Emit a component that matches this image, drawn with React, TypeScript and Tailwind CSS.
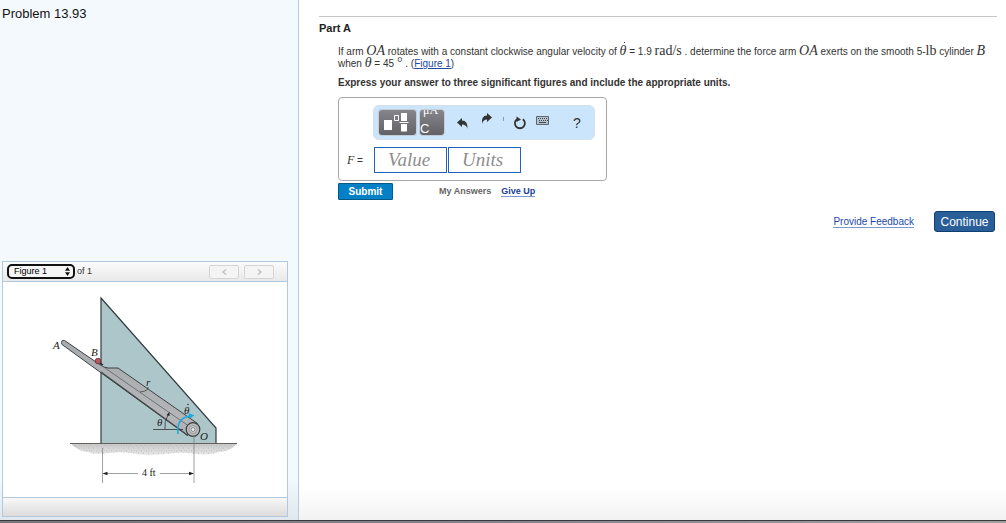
import React from "react";

const sans = "font-['Liberation_Sans',Arial,sans-serif]";
const serif = "font-['Liberation_Serif','Times_New_Roman',serif]";

function MathText({ children, upright = false }: { children: React.ReactNode; upright?: boolean }) {
  return (
    <span className={`${serif} text-[14px] leading-[0px] ${upright ? "" : "italic"}`}>{children}</span>
  );
}

function ArmDiagram() {
  return (
    <svg
      viewBox="3 282 284 215"
      className="block w-full"
      role="img"
      aria-label="Arm OA resting against cylinder B"
    >
      <defs>
        <linearGradient id="arm" x1="0" y1="1" x2="0.6" y2="0">
          <stop offset="0" stopColor="#8d9194" />
          <stop offset="0.5" stopColor="#b4b6b9" />
          <stop offset="1" stopColor="#9b9fa2" />
        </linearGradient>
        <linearGradient id="ground" x1="0" y1="0" x2="0" y2="1">
          <stop offset="0" stopColor="#c9c9c9" />
          <stop offset="1" stopColor="#e8e8e8" />
        </linearGradient>
        <pattern id="grain" width="5" height="5" patternUnits="userSpaceOnUse">
          <path d="M1 1h1M3 3h1M4 0h1" stroke="#b8b8b8" strokeWidth="1" />
        </pattern>
      </defs>
      <path d="M71 444H237Q229 452 218 452C205 458 190 451 175 453S145 456 130 453S100 457 88 452Q78 451 71 444Z" fill="url(#ground)" />
      <path d="M71 444H237Q229 452 218 452C205 458 190 451 175 453S145 456 130 453S100 457 88 452Q78 451 71 444Z" fill="url(#grain)" />
      <path d="M101 298L216 428V443.500H101Z" fill="#adc6ca" stroke="#343b3e" strokeWidth="1.200" />
      <path d="M70 443.500H237" stroke="#66605d" strokeWidth="1" />
      <path
        d="M64.500 340.500L99 364Q104 368 108 368H118L197.500 423.500L187.500 435.500L62 344.500Q60 340 64.500 340.500Z"
        fill="url(#arm)"
        stroke="#3e4244"
        strokeWidth="1"
      />
      <path d="M101 372L188 435.500" stroke="#43484a" strokeWidth="1.200" />
      <path d="M105 368L193 429" stroke="#53575a" strokeWidth="0.700" />
      <path d="M140 392Q149 391 148 387" fill="none" stroke="#333" strokeWidth="0.700" />
      <circle cx="98" cy="361" r="2.800" fill="#c2545b" stroke="#553436" strokeWidth="0.800" />
      <path d="M100 363l3 2" stroke="#222" strokeWidth="1.300" />
      <circle cx="193" cy="429.500" r="6.800" fill="#b8babb" stroke="#383d3f" strokeWidth="1.200" />
      <circle cx="193" cy="429.500" r="4" fill="#c8caca" stroke="#777" strokeWidth="0.500" />
      <circle cx="193" cy="429.500" r="1.900" fill="#eee" stroke="#666" strokeWidth="0.700" />
      <path d="M153 429.500H183M165 429Q164 421 168 415" fill="none" stroke="#333" strokeWidth="0.800" />
      <path d="M169.500 412l0 4l-3-1Z" fill="#222" />
      <path d="M178 434Q176 418 190 416" fill="none" stroke="#17aade" strokeWidth="1.500" />
      <path d="M188.500 413l6 2.500l-5 3Z" fill="#17aade" />
      <path d="M102.500 448V483M194 436V483M104 473.500H138M160 473.500H193" stroke="#777" strokeWidth="0.700" />
      <path d="M102.500 473.500l5-1.700v3.400ZM194 473.500l-5-1.700v3.400Z" fill="#222" />
      <g className={`${serif} italic`} fontSize="11" fill="#222">
        <text x="53" y="349">A</text>
        <text x="91" y="356">B</text>
        <text x="146" y="386">r</text>
        <text x="157" y="426">θ</text>
        <text x="184" y="414">θ</text>
        <text x="200" y="440">O</text>
      </g>
      <circle cx="188" cy="404.500" r="0.700" fill="#222" />
      <text x="142" y="476" fontSize="10" className={serif} fill="#222">4 ft</text>
    </svg>
  );
}

function FigurePanel() {
  const pager =
    "flex h-[14px] w-[30px] items-center justify-center rounded-xs border border-[#d5d5d5] bg-[#f4f4f4] text-[#bcbcbc]";
  return (
    <section className="mr-[10px] mb-[3px] ml-[2px] border border-[#b0c9df] bg-white">
      <header className="flex h-5 items-center border-b border-[#b0c9df] bg-linear-to-b from-[#fbfbfb] to-[#e9e9e9] pr-[13px] pl-1 text-[9px] text-[#333]">
        <div className="relative">
          <select
            aria-label="Figure"
            className="block h-[15px] w-[68px] appearance-none rounded-[5px] border-2 border-[#111] bg-[#f5f5f5] pl-[5px] text-[9px] leading-none text-black"
          >
            <option>Figure 1</option>
          </select>
          <svg viewBox="0 0 5 9" className="pointer-events-none absolute top-[3px] right-[5px] h-[9px] w-[5px]" aria-hidden="true">
            <path d="M0 3.800L2.500 0L5 3.800ZM0 5.200L2.500 9L5 5.200Z" fill="#111" />
          </svg>
        </div>
        <span className="ml-[2px]">of 1</span>
        <div className="ml-auto flex gap-[5px]">
          <button className={pager} aria-label="Previous figure">
            <svg viewBox="0 0 5 6" className="h-[6px] w-[5px]"><path d="M4 .5L1 3L4 5.500" fill="none" stroke="currentColor" strokeWidth="1.300" /></svg>
          </button>
          <button className={pager} aria-label="Next figure">
            <svg viewBox="0 0 5 6" className="h-[6px] w-[5px]"><path d="M1 .5L4 3L1 5.500" fill="none" stroke="currentColor" strokeWidth="1.300" /></svg>
          </button>
        </div>
      </header>
      <ArmDiagram />
      <footer className="h-[19px] border-t border-[#b0c9df] bg-linear-to-b from-[#f8f8f8] to-[#dcdcdc]" />
    </section>
  );
}

function EquationToolbar() {
  const dark = "rounded-[3px] bg-linear-to-b from-[#85858b] to-[#626267] shadow-[0_0_0_1px_#c4cdd5]";
  return (
    <div className="flex h-[35px] w-[222px] items-center rounded-md border border-[#d7dfe7] bg-[#cbe5fd] pl-[5px] text-[#333]">
      <button className={`${dark} h-[25px] w-[37px]`} aria-label="Templates">
        <svg viewBox="0 0 37 25" className="block h-[25px] w-[37px]">
          <path d="M5 10h8v10H5ZM22 3h6v8h-6ZM22 14h6v7.500h-6ZM20.500 12h9v1h-9Z" fill="#fff" />
          <path d="M15.500 5.500h4v5h-4Z" fill="none" stroke="#fff" />
        </svg>
      </button>
      <button className={`${dark} ml-1 flex h-[25px] w-6 flex-col justify-between overflow-hidden text-left text-white`} aria-label="Symbols">
        <span className={`${serif} -mt-[6px] pl-[3px] text-[12px] leading-[12px]`}>μÅ</span>
        <span className="text-[13px] leading-[13px]">C</span>
      </button>
      <button className="ml-[13px]" aria-label="Undo">
        <svg viewBox="0 0 12 12" className="block h-3 w-3">
          <path d="M0 5.500L5 1V3.500Q11 3.500 10.500 12Q9.500 7.500 5 7.500V10Z" fill="currentColor" />
        </svg>
      </button>
      <button className="mb-[9px] ml-3" aria-label="Redo">
        <svg viewBox="0 0 12 12" className="block h-3 w-3">
          <path d="M11 5.500L6 1V3.500Q0 3.500 1 12Q2 7.500 6 7.500V10Z" fill="currentColor" />
        </svg>
      </button>
      <span className="mb-2 ml-[10px] h-1 w-px bg-[#879bac]" />
      <button className="ml-[9px]" aria-label="Reset">
        <svg viewBox="0 0 14 14" className="block h-[14px] w-[14px]">
          <path d="M9.800 3.200A5 5 0 1 1 4 3.200" fill="none" stroke="currentColor" strokeWidth="1.800" />
          <path d="M3.500 0.500L8 3.500L3.500 6Z" fill="currentColor" />
        </svg>
      </button>
      <button className="mb-1 ml-[9px]" aria-label="Keyboard">
        <svg viewBox="0 0 14 10" className="block h-[10px] w-[14px]">
          <path d="M.5 .5h12v8H.5Z" fill="#b4c1cc" stroke="#5d6870" />
          <path d="M2 2.500h10M3 4.500h9" stroke="#3f4950" strokeDasharray="1 1" />
          <path d="M3 6.500h7" stroke="#3f4950" />
        </svg>
      </button>
      <button className="ml-[23px] text-[14px] leading-none" aria-label="Help">?</button>
    </div>
  );
}

export default function App() {
  const answer = `${serif} h-[26px] w-[73px] border border-[#2463bd] bg-white px-[13px] text-[19px] italic outline-none placeholder:text-[#8d8d8d]`;
  return (
    <div className={`${sans} flex min-h-screen flex-col bg-white text-[#333]`}>
      <div className="flex flex-1">
        <aside className="flex w-[299px] shrink-0 flex-col justify-between border-r border-[#b5cce1] bg-linear-to-b from-[#f4f9fd] from-92% to-[#e2e7ed]">
          <h1 className="pt-[6px] pl-[2px] text-[13px] leading-[15px] text-[#111]">Problem 13.93</h1>
          <FigurePanel />
        </aside>
        <main className="min-w-0 flex-1 bg-linear-to-b from-white from-94% to-[#f2f2f2] pt-4 pr-[9px] pl-5">
          <hr className="border-[#c6c6c6]" />
          <h2 className="mt-[5px] text-[11px] leading-[13px] font-bold text-[#222]">Part A</h2>
          <div className="pl-[19px]">
            <p className="mt-[11px] text-[10px] leading-3">
              If arm <MathText>OA</MathText> rotates with a constant clockwise angular velocity of{" "}
              <span className="relative">
                <MathText>θ</MathText>
                <span className="absolute -top-1 left-1 size-px bg-[#333]" />
              </span>{" "}
              = 1.9 <MathText upright>rad/s</MathText> . determine the force arm <MathText>OA</MathText> exerts on the smooth 5-<MathText upright>lb</MathText> cylinder{" "}
              <MathText>B</MathText> when <MathText>θ</MathText> = 45 <MathText upright>°</MathText> . (
              <a href="#figure" className="text-[#1a49a8] underline">Figure 1</a>)
            </p>
            <p className="mt-[7px] text-[10px] leading-3 font-bold">
              Express your answer to three significant figures and include the appropriate units.
            </p>
            <div className="mt-2 flex h-[84px] w-[269px] flex-col gap-[7px] rounded-[4px] border border-[#a8a8a8] pt-[7px] pl-[34px]">
              <EquationToolbar />
              <div className="-ml-[26px] flex items-center">
                <span className="w-[27px] text-[10px]">
                  <span className={`${serif} text-[12px] italic`}>F</span> =
                </span>
                <input aria-label="Value" placeholder="Value" className={answer} />
                <input aria-label="Units" placeholder="Units" className={`${answer} ml-px`} />
              </div>
            </div>
            <div className="mt-[2px] flex items-center text-[9px] font-bold">
              <button className="h-[17px] w-[55px] rounded-[1px] border border-[#075985] bg-[#0380c6] text-[10px] leading-none text-white">Submit</button>
              <span className="ml-[46px] text-[#666]">My Answers</span>
              <a href="#give-up" className="ml-[10px] border-b border-[#7d99ce] leading-[10px] text-[#173f9c]">Give Up</a>
            </div>
          </div>
          <div className="mt-[11px] flex items-center justify-end gap-5 pr-[2px]">
            <a href="#feedback" className="border-b border-[#7d99ce] text-[10px] leading-[11px] text-[#1a49a8]">Provide Feedback</a>
            <button className="h-[21px] w-[61px] rounded-[3px] border border-[#0d3f72] bg-[#295e98] text-[12px] leading-none text-white">Continue</button>
          </div>
        </main>
      </div>
      <div className="h-[3px] border-t border-[#3a383c] bg-linear-to-r from-[#77777a] via-[#85838d] to-[#a0a0a0]" />
    </div>
  );
}
